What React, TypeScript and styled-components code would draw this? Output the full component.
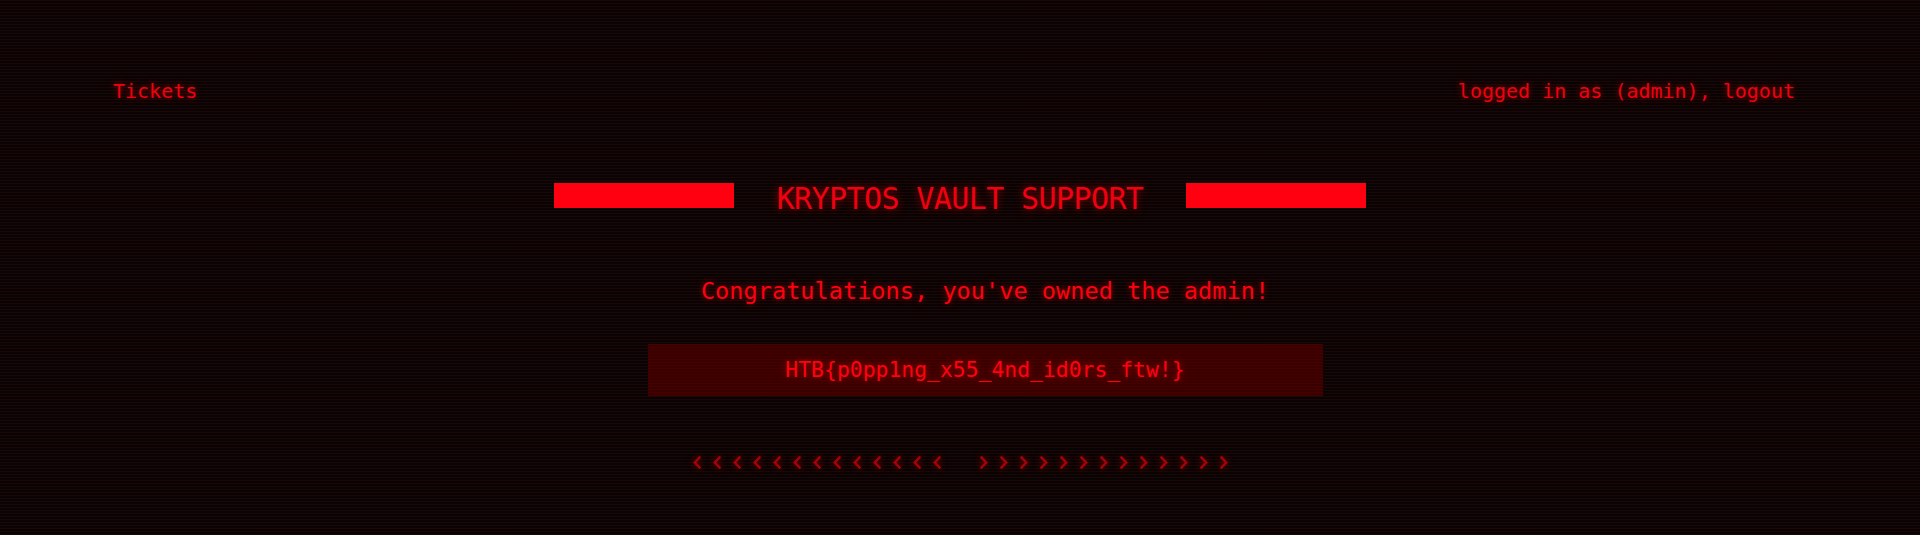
import React from "react";
import styled, { createGlobalStyle } from "styled-components";

const GlobalStyle = createGlobalStyle`
  html, body {
    margin: 0;
    padding: 0;
    background: #0a0303;
  }
  body {
    font-family: "DejaVu Sans Mono", "Liberation Mono", monospace;
    color: #ff0000;
  }
`;

const Page = styled.div`
  position: relative;
  min-height: 535px;
  width: 100%;
  background-color: #0a0303;
  background-image: repeating-linear-gradient(
    to bottom,
    rgba(40, 10, 10, 0.55) 0px,
    rgba(40, 10, 10, 0.55) 1px,
    rgba(0, 0, 0, 0) 1px,
    rgba(0, 0, 0, 0) 3px
  );
  display: flex;
  flex-direction: column;
  overflow: hidden;
`;

const Nav = styled.nav`
  display: flex;
  justify-content: space-between;
  align-items: flex-start;
  padding: 79px 125px 0 113px;
`;

const NavLink = styled.a`
  font-size: 20px;
  line-height: 24px;
  color: #f00010;
  text-decoration: none;
  text-shadow: 0 0 6px rgba(255, 0, 0, 0.55);
  cursor: pointer;
`;

const TitleRow = styled.header`
  display: flex;
  justify-content: center;
  align-items: flex-start;
  gap: 43px;
  margin-top: 78px;
`;

const Bar = styled.div`
  width: 180px;
  height: 25px;
  margin-top: 2px;
  background: #ff0010;
`;

const Title = styled.h1`
  margin: 0;
  font-family: "DejaVu Sans Mono", monospace;
  font-weight: normal;
  font-size: 30px;
  line-height: 36px;
  letter-spacing: -0.6px;
  color: #f00010;
  text-shadow: 0 0 8px rgba(255, 0, 0, 0.55);
`;

const Content = styled.main`
  display: flex;
  flex-direction: column;
  align-items: center;
  padding-left: 50px;
`;

const Message = styled.p`
  margin: 60px 0 0;
  font-size: 23.6px;
  line-height: 28px;
  color: #ff0010;
  text-shadow: 0 0 6px rgba(255, 0, 0, 0.55);
`;

const FlagBox = styled.div`
  margin-top: 39px;
  width: 675px;
  height: 52px;
  display: flex;
  align-items: center;
  justify-content: center;
  background-color: #3a0000;
  background-image: repeating-linear-gradient(
    to bottom,
    rgba(80, 0, 0, 0.5) 0px,
    rgba(80, 0, 0, 0.5) 1px,
    rgba(0, 0, 0, 0) 1px,
    rgba(0, 0, 0, 0) 3px
  );
`;

const Flag = styled.span`
  font-size: 21.4px;
  line-height: 26px;
  color: #ff0010;
  text-shadow: 0 0 6px rgba(255, 0, 0, 0.6);
`;

const ChevronRow = styled.div`
  display: flex;
  justify-content: center;
  align-items: center;
  margin-top: 60px;
  gap: 39px;
`;

const ChevronGroup = styled.div`
  display: flex;
  gap: 12px;
`;

const ChevronIcon = styled.svg`
  width: 8px;
  height: 13px;
  display: block;
  filter: drop-shadow(0 0 3px rgba(180, 0, 0, 0.7));
`;

const Chevron: React.FC<{ dir: "left" | "right" }> = ({ dir }) => (
  <ChevronIcon viewBox="0 0 8 13">
    <polyline
      points={dir === "left" ? "6.5,1.5 1.8,6.5 6.5,11.5" : "1.5,1.5 6.2,6.5 1.5,11.5"}
      fill="none"
      stroke="#a80008"
      strokeWidth="2.4"
      strokeLinecap="square"
    />
  </ChevronIcon>
);

export default function App() {
  const count = Array.from({ length: 13 }, (_, i) => i);
  return (
    <>
      <GlobalStyle />
      <Page>
        <Nav>
          <NavLink>Tickets</NavLink>
          <NavLink>logged in as (admin), logout</NavLink>
        </Nav>
        <TitleRow>
          <Bar />
          <Title>KRYPTOS VAULT SUPPORT</Title>
          <Bar />
        </TitleRow>
        <Content>
          <Message>Congratulations, you've owned the admin!</Message>
          <FlagBox>
            <Flag>HTB{"{"}p0pp1ng_x55_4nd_id0rs_ftw!{"}"}</Flag>
          </FlagBox>
        </Content>
        <ChevronRow>
          <ChevronGroup>
            {count.map((i) => (
              <Chevron key={i} dir="left" />
            ))}
          </ChevronGroup>
          <ChevronGroup>
            {count.map((i) => (
              <Chevron key={i} dir="right" />
            ))}
          </ChevronGroup>
        </ChevronRow>
      </Page>
    </>
  );
}
